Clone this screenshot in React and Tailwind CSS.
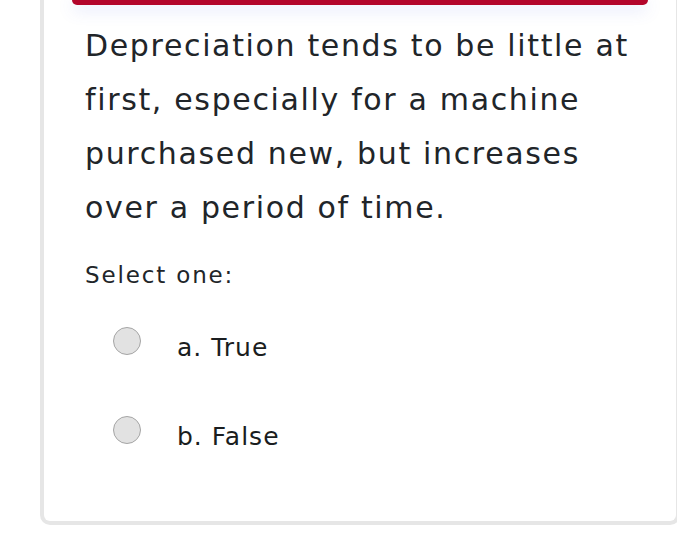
export default function App() {
  const options = [
    { id: "a", label: "a. True" },
    { id: "b", label: "b. False" },
  ];

  return (
    <div className="w-[677px] h-[560px] overflow-hidden bg-white" style={{ fontFamily: '"DejaVu Sans", sans-serif' }}>
      <div className="ml-[40px] w-[640px] h-[525px] bg-white border-4 border-t-0 border-[#e6e6e6] rounded-b-[10px] flex flex-col">
        {/* top accent */}
        <div className="mx-[28px] h-[5px] bg-[#b3052b] rounded-b-[8px] shadow-[0_4px_16px_rgba(80,100,230,0.25)]" />

        <div className="pl-[41px] pr-[34px] pt-[14px] text-[#212529]">
          <p className="text-[30px] leading-[54px] tracking-[1.65px]">
            Depreciation tends to be little at first, especially for a machine purchased new, but increases over a period of time.
          </p>
          <p className="mt-[22px] text-[23px] leading-[36px] tracking-[1.85px]">Select one:</p>

          <div className="mt-[27px] flex flex-col gap-[47px]">
            {options.map((o) => (
              <label key={o.id} className="flex items-center pl-[28px]">
                <span className="w-[28px] h-[28px] rounded-full bg-[#e2e2e2] border border-[#a5a5a5]" />
                <span className="ml-[36px] mt-[14px] text-[25px] leading-[28px] tracking-[1px] text-[#1a1d20]">{o.label}</span>
              </label>
            ))}
          </div>
        </div>
      </div>
    </div>
  );
}
